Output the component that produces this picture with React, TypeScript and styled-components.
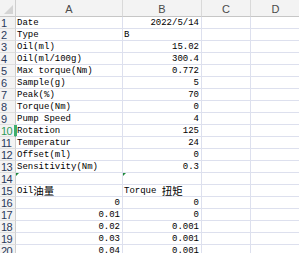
import styled, { createGlobalStyle } from "styled-components";

const GlobalStyle = createGlobalStyle`
  html, body {
    margin: 0;
    padding: 0;
    background: #ffffff;
    overflow: hidden;
  }
`;

type Row = {
  n: number;
  a?: string;
  aCjk?: string;
  aRight?: boolean;
  b?: string;
  bCjk?: string;
  bLeft?: boolean;
  mark?: boolean;
};

const rows: Row[] = [
  { n: 1, a: "Date", b: "2022/5/14" },
  { n: 2, a: "Type", b: "B", bLeft: true },
  { n: 3, a: "Oil(ml)", b: "15.02" },
  { n: 4, a: "Oil(ml/100g)", b: "300.4" },
  { n: 5, a: "Max torque(Nm)", b: "0.772" },
  { n: 6, a: "Sample(g)", b: "5" },
  { n: 7, a: "Peak(%)", b: "70" },
  { n: 8, a: "Torque(Nm)", b: "0" },
  { n: 9, a: "Pump Speed", b: "4" },
  { n: 10, a: "Rotation", b: "125" },
  { n: 11, a: "Temperatur", b: "24" },
  { n: 12, a: "Offset(ml)", b: "0" },
  { n: 13, a: "Sensitivity(Nm)", b: "0.3" },
  { n: 14, mark: true },
  { n: 15, a: "Oil", aCjk: "油量", b: "Torque ", bCjk: "扭矩", bLeft: true },
  { n: 16, a: "0", aRight: true, b: "0" },
  { n: 17, a: "0.01", aRight: true, b: "0" },
  { n: 18, a: "0.02", aRight: true, b: "0.001" },
  { n: 19, a: "0.03", aRight: true, b: "0.001" },
  { n: 20, a: "0.04", aRight: true, b: "0.001" },
];

const ACTIVE_ROW = 10;

const App = () => {
  return (
    <>
      <GlobalStyle />
      <Sheet>
        <Corner>
          <CornerTriangle />
        </Corner>
        <ColHead>A</ColHead>
        <ColHead>B</ColHead>
        <ColHead>C</ColHead>
        <ColHead>D</ColHead>
        {rows.map((r) => (
          <RowGroup key={r.n}>
            <RowHead $active={r.n === ACTIVE_ROW}>{r.n}</RowHead>
            <Cell $right={r.aRight} $active={r.n === ACTIVE_ROW}>
              {r.mark && <ErrorMark />}
              {r.a}
              {r.aCjk && <Cjk>{r.aCjk}</Cjk>}
            </Cell>
            <Cell $right={!r.bLeft}>
              {r.mark && <ErrorMark />}
              {r.b}
              {r.bCjk && <Cjk>{r.bCjk}</Cjk>}
            </Cell>
            <Cell />
            <Cell />
          </RowGroup>
        ))}
      </Sheet>
    </>
  );
};

const Sheet = styled.div`
  display: grid;
  grid-template-columns: 16px 107px 79px 49px 50px;
  grid-template-rows: 17px;
  grid-auto-rows: 12px;
  width: 301px;
  height: 253px;
  overflow: hidden;
  background: #ffffff;
`;

const RowGroup = styled.div`
  display: contents;
`;

const Corner = styled.div`
  position: relative;
  background: #f3f3f3;
  border-right: 1px solid #cfcfcf;
  border-bottom: 1px solid #c6c6c6;
  box-sizing: border-box;
`;

const CornerTriangle = styled.div`
  position: absolute;
  right: 2px;
  bottom: 2px;
  width: 0;
  height: 0;
  border-left: 9px solid transparent;
  border-bottom: 9px solid #d4d4d4;
`;

const ColHead = styled.div`
  background: #f3f3f3;
  border-right: 1px solid #d9d9d9;
  border-bottom: 1px solid #c6c6c6;
  box-sizing: border-box;
  display: flex;
  align-items: center;
  justify-content: center;
  font-family: "Liberation Sans", Arial, sans-serif;
  font-size: 11px;
  color: #4a4a4a;
  padding-top: 1px;
`;

const RowHead = styled.div<{ $active?: boolean }>`
  background: #f3f3f3;
  border-right: ${({ $active }) =>
    $active ? "2px solid #3fae6c" : "1px solid #cfcfcf"};
  border-bottom: 1px solid #dedede;
  box-sizing: border-box;
  font-family: "Liberation Sans", Arial, sans-serif;
  font-size: 11px;
  line-height: 12px;
  letter-spacing: -0.5px;
  color: ${({ $active }) => ($active ? "#2e9a5a" : "#2b3a5c")};
  padding-left: 1px;
  white-space: nowrap;
  overflow: visible;
`;

const Cell = styled.div<{ $right?: boolean; $active?: boolean }>`
  position: relative;
  border-right: 1px solid #dde0ee;
  border-bottom: 1px solid #dde0ee;
  box-sizing: border-box;
  font-family: "Liberation Mono", "Noto Sans CJK SC", monospace;
  font-size: 9px;
  line-height: 12px;
  color: #000000;
  text-align: ${({ $right }) => ($right ? "right" : "left")};
  padding: 0 2px 0 1px;
  white-space: nowrap;
  overflow: visible;
  ${({ $active }) => ($active ? "box-shadow: inset 1px 0 0 #3fae6c;" : "")}
`;

const Cjk = styled.span`
  font-family: "Noto Sans CJK SC", sans-serif;
  font-size: 10.5px;
  line-height: 11px;
  vertical-align: top;
`;

const ErrorMark = styled.span`
  position: absolute;
  left: 0;
  top: 0;
  width: 0;
  height: 0;
  border-top: 3px solid #1f8a3c;
  border-right: 3px solid transparent;
`;

export default App;
